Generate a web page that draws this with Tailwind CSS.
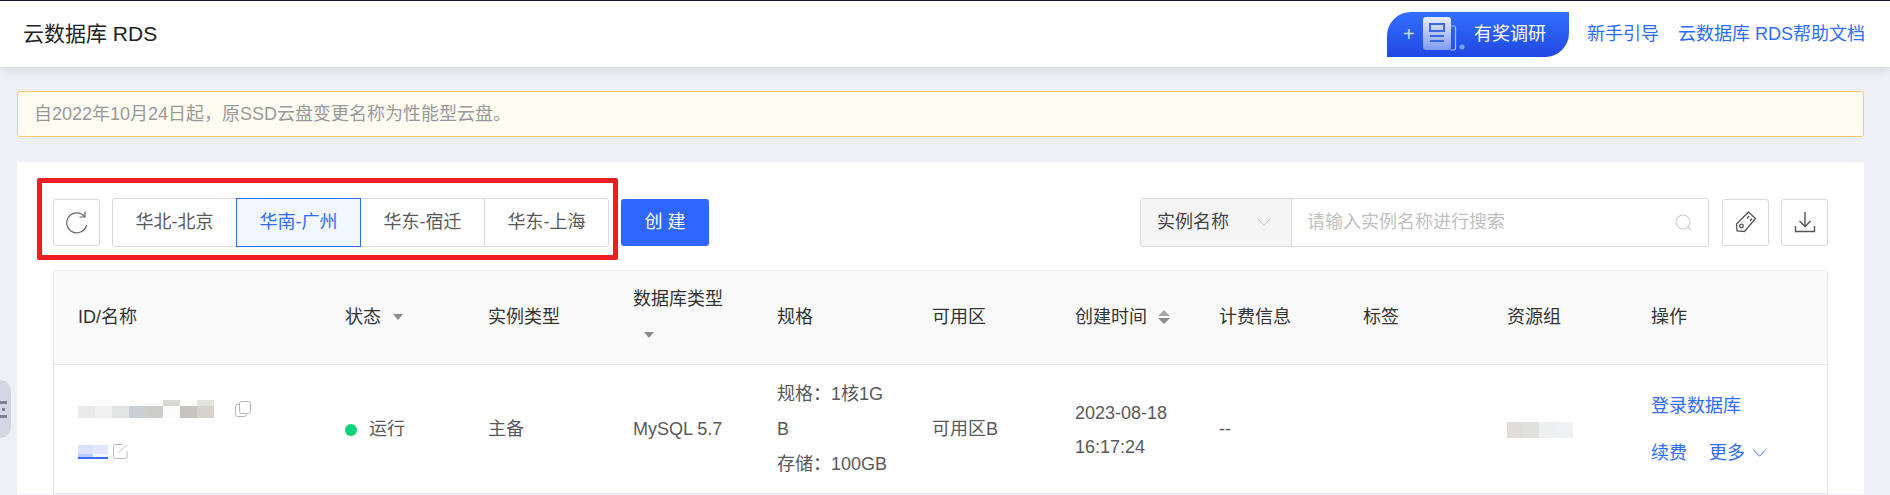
<!DOCTYPE html>
<html lang="zh-CN">
<head>
<meta charset="utf-8">
<script src="https://cdn.jsdelivr.net/npm/@tailwindcss/browser@4"></script>
<title>云数据库 RDS</title>
</head>
<body class="h-[495px] overflow-hidden bg-[#eef0f5] font-['Liberation_Sans','Noto_Sans_CJK_SC',sans-serif] text-[18px] text-[#595959]">
<header class="relative z-10 flex h-[67px] items-center border-t border-[#10141f] bg-white pl-[23px] pr-[25px] shadow-[0_2px_10px_rgba(0,0,0,0.12)]">
  <h1 class="text-[21px] font-normal text-[#222]">云数据库 RDS</h1>
  <div class="ml-auto flex items-center">
    <a class="flex h-[45px] w-[182px] items-center rounded-tl-[24px] rounded-br-[24px] bg-gradient-to-b from-[#326fff] to-[#2147e2] pl-[16px] text-white">
      <span class="w-[15px] text-[20px] leading-none text-[#cfdcff]">+</span>
      <svg class="ml-[5px] h-[36px] w-[42px]" viewBox="0 0 42 36" fill="none">
        <defs><linearGradient id="doc" x1="0" y1="0" x2="0" y2="1"><stop offset="0" stop-color="#e9eeff"/><stop offset="1" stop-color="#7f9cf2"/></linearGradient></defs>
        <rect x="0" y="1" width="28" height="33" rx="3" fill="url(#doc)"/>
        <path d="M28 10h2.500a2 2 0 0 1 2 2v20a2 2 0 0 1-2 2H27" stroke="#a9bdf8" stroke-width="1.200"/>
        <rect x="7" y="8" width="14" height="7" fill="none" stroke="#3b66e6" stroke-width="2"/>
        <path d="M7 20h14M7 25h14" stroke="#3b66e6" stroke-width="2"/>
        <circle cx="39" cy="31" r="2.500" fill="#7da0ff"/>
      </svg>
      <span class="ml-[9px] text-[18px]">有奖调研</span>
    </a>
    <a class="ml-[18px] text-[#2f6bff]">新手引导</a>
    <a class="ml-[19px] text-[#2f6bff]">云数据库 RDS帮助文档</a>
  </div>
</header>

<div aria-hidden="true" class="absolute left-0 top-[380px] flex h-[58px] w-[11px] flex-col items-start justify-center gap-[4px] rounded-r-[11px] bg-[#d3d7e3]">
  <span class="h-[3px] w-[7px] bg-[#7d8394]"></span>
  <span class="ml-[2px] h-[3px] w-[3px] bg-[#7d8394]"></span>
  <span class="h-[3px] w-[7px] bg-[#7d8394]"></span>
</div>

<main class="pl-[17px] pr-[26px]">
  <div class="mt-[24px] flex h-[46px] items-center rounded-[3px] border border-[#fcca6e] bg-[#fffcf2] pl-[16px] text-[#999]">自2022年10月24日起，原SSD云盘变更名称为性能型云盘。</div>

  <section class="relative mt-[25px] bg-white px-[36px] pt-[35px]">
    <div class="absolute left-[20px] top-[16px] z-10 h-[82px] w-[581px] rounded-[2px] border-[5px] border-[#ee1c25]"></div>

    <div class="flex h-[50px] items-center">
      <button class="flex h-[47px] w-[47px] items-center justify-center rounded-[3px] border border-[#d9d9d9]">
        <svg class="h-[24px] w-[24px]" viewBox="0 0 24 24" fill="none" stroke="#666" stroke-width="1.200"><path d="M19.500 6.500A10 10 0 1 0 21.500 15"/><path d="M20 1.500v5.500h-5.500"/></svg>
      </button>
      <div class="ml-[12px] flex h-[49px] w-[497px] rounded-[3px] border border-[#d9d9d9]">
        <button class="flex-1">华北-北京</button>
        <button class="-my-px flex-1 border border-[#2f6bff] bg-[#f0f7ff] text-[#2f6bff]">华南-广州</button>
        <button class="flex-1">华东-宿迁</button>
        <button class="flex-1 border-l border-[#d9d9d9]">华东-上海</button>
      </div>
      <button class="ml-[12px] h-[47px] w-[88px] rounded-[3px] bg-[#2e66ff] text-white">创 建</button>

      <div class="ml-auto flex h-[49px] w-[569px] rounded-[3px] border border-[#d9d9d9]">
        <div class="flex w-[151px] items-center border-r border-[#d9d9d9] bg-[#f5f5f5] pl-[16px] text-[#444]">实例名称
          <svg class="ml-[28px] h-[8px] w-[14px]" viewBox="0 0 14 8" fill="none" stroke="#bbb"><path d="M.5.500 7 7.500 13.500.500"/></svg>
        </div>
        <div class="flex flex-1 items-center pl-[15px] pr-[16px] text-[#bfbfbf]">请输入实例名称进行搜索
          <svg class="ml-auto h-[17px] w-[17px]" viewBox="0 0 17 17" fill="none" stroke="#ccc" stroke-width="1.200"><circle cx="8" cy="8" r="7"/><path d="m13 13 3 3"/></svg>
        </div>
      </div>
      <button class="ml-[13px] flex h-[47px] w-[47px] items-center justify-center rounded-[3px] border border-[#d9d9d9]">
        <svg class="h-[24px] w-[24px]" viewBox="0 0 24 24" fill="none" stroke="#555" stroke-width="1.300"><path d="M14.500 2 21.500 8.500 10.500 21.500 3 21l-.5-7z"/><circle cx="7.500" cy="16" r="1.800"/><path d="m15 6-2 2.500M18 8.500l-2 2.500"/></svg>
      </button>
      <button class="ml-[12px] flex h-[47px] w-[47px] items-center justify-center rounded-[3px] border border-[#d9d9d9]">
        <svg class="h-[22px] w-[22px]" viewBox="0 0 22 22" fill="none" stroke="#555" stroke-width="1.400"><path d="M11 1v14M5.500 10 11 15.500 16.500 10M1.500 15v5.500h19V15"/></svg>
      </button>
    </div>

    <div class="mt-[23px] rounded-t-[3px] border-x border-t border-[#e8e8e8]">
      <table class="w-full table-fixed border-collapse text-left">
        <colgroup>
          <col class="w-[266px]"><col class="w-[143px]"><col class="w-[145px]"><col class="w-[144px]"><col class="w-[155px]"><col class="w-[143px]"><col class="w-[144px]"><col class="w-[144px]"><col class="w-[144px]"><col class="w-[144px]"><col>
        </colgroup>
        <thead class="bg-[#fafafa] text-[#333]">
          <tr class="h-[93px] border-b border-[#e8e8e8] [&>th]:pl-[25px] [&>th]:font-normal [&>th:first-child]:pl-[24px]">
            <th>ID/名称</th>
            <th><span class="flex items-center gap-[12px]">状态<i class="h-0 w-0 border-x-[5px] border-t-[6px] border-x-transparent border-t-[#8c8c8c]"></i></span></th>
            <th>实例类型</th>
            <th><span class="block leading-[35px]">数据库类型</span><span class="flex h-[35px] items-center pl-[11px]"><i class="h-0 w-0 border-x-[5px] border-t-[6px] border-x-transparent border-t-[#8c8c8c]"></i></span></th>
            <th>规格</th>
            <th>可用区</th>
            <th><span class="flex items-center gap-[11px]">创建时间<span class="flex flex-col gap-[2px]"><i class="h-0 w-0 border-x-[6px] border-b-[6px] border-x-transparent border-b-[#a6a6a6]"></i><i class="h-0 w-0 border-x-[6px] border-t-[6px] border-x-transparent border-t-[#8c8c8c]"></i></span></span></th>
            <th>计费信息</th>
            <th>标签</th>
            <th>资源组</th>
            <th>操作</th>
          </tr>
        </thead>
        <tbody>
          <tr class="h-[129px] border-b border-[#e8e8e8] [&>td]:pl-[25px] [&>td]:pt-[2px] [&>td:first-child]:pl-[24px]">
            <td>
              <div class="flex items-center gap-[21px]">
                <div class="grid h-[18px] w-[136px] grid-cols-8 grid-rows-[6px_12px]">
                  <i class="bg-white"></i><i class="bg-[#fafafa]"></i><i class="bg-white"></i><i class="bg-white"></i><i class="bg-[#fdfdfb]"></i><i class="bg-[#d8d8d6]"></i><i class="bg-white"></i><i class="bg-[#e2e2de]"></i>
                  <i class="bg-[#e9e9e9]"></i><i class="bg-[#eff0ef]"></i><i class="bg-[#e2e5e3]"></i><i class="bg-[#c8d0d3]"></i><i class="bg-[#cfcdca]"></i><i class="bg-[#fcfcfc]"></i><i class="bg-[#c6c4c1]"></i><i class="bg-[#d6d3ce]"></i>
                </div>
                <svg class="h-[16px] w-[16px]" viewBox="0 0 16 16" fill="none" stroke="#b5b5b5"><rect x="4.500" y=".5" width="11" height="12" rx="2"/><path d="M4 3.500H2.500a2 2 0 0 0-2 2v8a2 2 0 0 0 2 2h7a2 2 0 0 0 2-2"/></svg>
              </div>
              <div class="mt-[26px] flex items-center gap-[5px]">
                <div class="grid h-[14px] w-[30px] grid-cols-2 grid-rows-[9px_3px_2px]">
                  <i class="bg-[#dbe1ff]"></i><i class="bg-[#e2e6ff]"></i><i class="bg-[#bccbff]"></i><i class="bg-[#f4f6ff]"></i><i class="bg-[#3f6bff]"></i><i class="bg-[#3f6bff]"></i>
                </div>
                <svg class="h-[15px] w-[15px]" viewBox="0 0 16 16" fill="none" stroke="#b5b5b5"><path d="M15 7.500v6a2 2 0 0 1-2 2H2.500a2 2 0 0 1-2-2V2.500a2 2 0 0 1 2-2H10M14.500 1 6 9.500"/></svg>
              </div>
            </td>
            <td><span class="flex items-center gap-[12px]"><i class="h-[12px] w-[12px] rounded-full bg-[#0fd27c]"></i>运行</span></td>
            <td>主备</td>
            <td>MySQL 5.7</td>
            <td class="break-all pr-[12px] leading-[35px]">规格：1核1G<br>B<br>存储：100GB</td>
            <td>可用区B</td>
            <td class="leading-[34px]">2023-08-18<br>16:17:24</td>
            <td>--</td>
            <td></td>
            <td>
              <div class="flex h-[16px] w-[66px]"><i class="w-[15px] bg-[#e0dcd9]"></i><i class="w-[17px] bg-[#e0e0df]"></i><i class="w-[17px] bg-[#eeeff0]"></i><i class="w-[17px] bg-[#f0f1f2]"></i></div>
            </td>
            <td class="text-[#2f6bff]">
              <div>登录数据库</div>
              <div class="mt-[20px] flex items-center"><span>续费</span><span class="ml-[22px]">更多</span><svg class="ml-[8px] h-[8px] w-[13px]" viewBox="0 0 14 8" fill="none" stroke="#2f6bff"><path d="M.5.500 7 7.500 13.500.500"/></svg></div>
            </td>
          </tr>
        </tbody>
      </table>
    </div>
  </section>
</main>
</body>
</html>
